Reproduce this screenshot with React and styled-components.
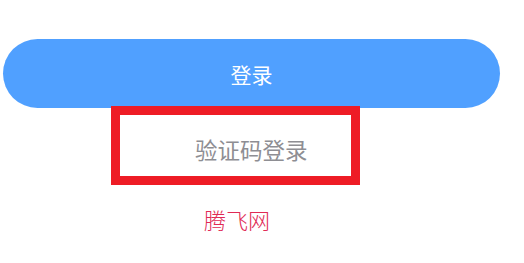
import React from 'react';
import styled, { createGlobalStyle } from 'styled-components';

const GlobalStyle = createGlobalStyle`
body {
  margin: 0;
  background: #ffffff;
  font-family: 'Noto Sans CJK SC', 'Noto Sans', sans-serif;
}
`;

const Page = styled.div`
display: flex;
flex-direction: column;
align-items: flex-start;
padding-top: 39px;
width: 524px;
height: 263px;
box-sizing: border-box;
`;

const LoginButton = styled.button`
margin-left: 3px;
width: 497px;
height: 69px;
border: none;
border-radius: 35px;
background: #50a0ff;
color: #ffffff;
font-family: inherit;
font-size: 21px;
display: flex;
align-items: center;
justify-content: center;
padding: 0;
`;

const CodeLogin = styled.div`
position: relative;
margin-top: -2px;
margin-left: 111px;
width: 249px;
height: 79px;
box-sizing: border-box;
border: 9px solid #ee1c25;
display: flex;
align-items: center;
padding-left: 75px;
padding-top: 7px;
color: #8e8e93;
font-size: 22.5px;
`;

const Brand = styled.div`
margin-top: 19px;
margin-left: 204px;
color: #e02a55;
font-size: 22px;
font-weight: 300;
line-height: 31px;
`;

const App = () => {
  return (
    <Page>
      <GlobalStyle />
      <LoginButton>登录</LoginButton>
      <CodeLogin>验证码登录</CodeLogin>
      <Brand>腾飞网</Brand>
    </Page>
  );
};

export default App;
